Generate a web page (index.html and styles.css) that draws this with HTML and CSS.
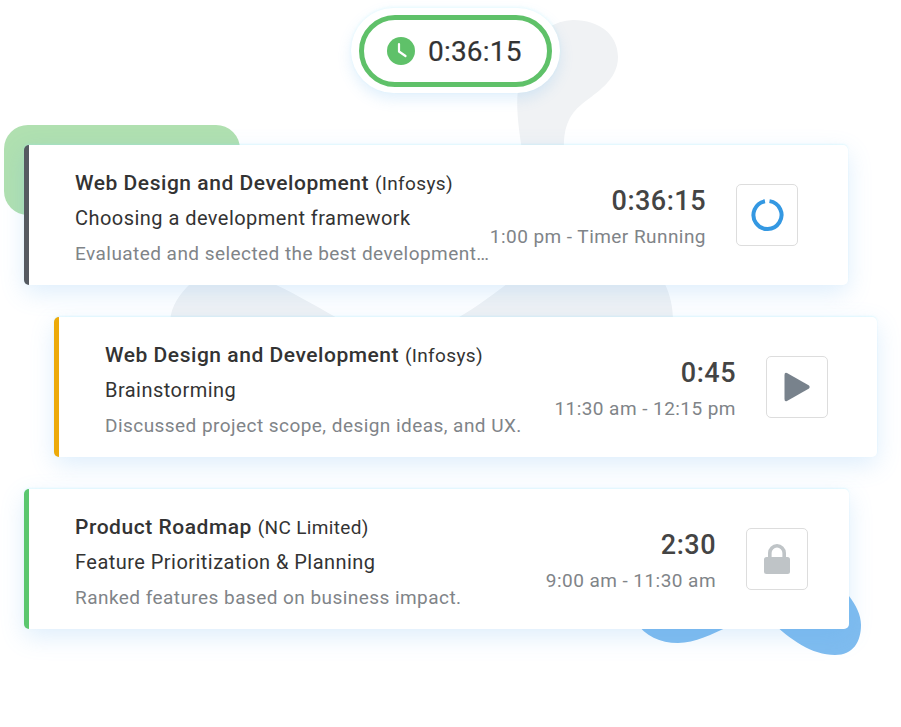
FILE: index.html
```html
<!DOCTYPE html>
<html lang="en">
<head>
    <meta charset="UTF-8">
    <meta name="viewport" content="width=device-width, initial-scale=1.0">
    <title>Timesheet Entries</title>
    <link rel="stylesheet" href="styles.css">
</head>

<body>
    <div class="page">
        <!-- Background shapes behind the cards -->
        <svg class="blobs" width="901" height="727" viewBox="0 0 901 727" aria-hidden="true">
            <path fill="#f0f2f4" d="M522 150 C518 125 516 105 518 90 C516 60 535 22 573 20 C600 20 618 35 618 57 C618 80 597 92 582 104 C568 115 563 130 564 150 Z"/>
            <path fill="#f0f2f4" d="M170 322 C171 305 180 294 190 284 L274 284 C300 296 322 310 345 322 Z"/>
            <path fill="#f0f2f4" d="M450 322 C470 312 488 298 507 284 L665 284 C670 295 673 306 673 322 Z"/>
            <path fill="#7fbcef" d="M636 622 C645 636 660 643 678 643 C695 643 712 634 730 626 Z"/>
            <path fill="#7fbcef" d="M770 620 C790 640 812 655 835 655 C853 655 861 642 861 625 C861 615 856 605 849 596 L840 620 Z"/>
        </svg>
        <div class="green-blob"></div>

        <div class="timer-pill">
            <div class="timer-inner">
                <svg class="clock-icon" width="28" height="28" viewBox="0 0 28 28">
                    <circle cx="14" cy="14" r="14" fill="#5fc169"/>
                    <path d="M12 7 V14.5 L18.5 19" fill="none" stroke="#fff" stroke-width="2.2" stroke-linecap="round" stroke-linejoin="round"/>
                </svg>
                <span class="timer-value">0:36:15</span>
            </div>
        </div>

        <div class="card card-running">
            <div class="card-info">
                <div class="card-title"><strong>Web Design and Development</strong> <span class="client">(Infosys)</span></div>
                <div class="card-task">Choosing a development framework</div>
                <div class="card-desc">Evaluated and selected the best development…</div>
            </div>
            <div class="card-time">
                <div class="duration">0:36:15</div>
                <div class="range">1:00 pm - Timer Running</div>
            </div>
            <div class="action-btn">
                <svg width="36" height="36" viewBox="0 0 36 36">
                    <path d="M20.5 4.14 A14 14 0 1 1 16 4.22" fill="none" stroke="#3498e2" stroke-width="4"/>
                </svg>
            </div>
        </div>

        <div class="card card-paused">
            <div class="card-info">
                <div class="card-title"><strong>Web Design and Development</strong> <span class="client">(Infosys)</span></div>
                <div class="card-task">Brainstorming</div>
                <div class="card-desc">Discussed project scope, design ideas, and UX.</div>
            </div>
            <div class="card-time">
                <div class="duration">0:45</div>
                <div class="range">11:30 am - 12:15 pm</div>
            </div>
            <div class="action-btn">
                <svg width="30" height="34" viewBox="0 0 30 34">
                    <path d="M5 3 L27 15.5 Q28.5 17 27 18.5 L5 31 Q2.5 32 2.5 29 V5 Q2.5 2 5 3 Z" fill="#78828c"/>
                </svg>
            </div>
        </div>

        <div class="card card-locked">
            <div class="card-info">
                <div class="card-title"><strong>Product Roadmap</strong> <span class="client">(NC Limited)</span></div>
                <div class="card-task">Feature Prioritization &amp; Planning</div>
                <div class="card-desc">Ranked features based on business impact.</div>
            </div>
            <div class="card-time">
                <div class="duration">2:30</div>
                <div class="range">9:00 am - 11:30 am</div>
            </div>
            <div class="action-btn">
                <svg width="28" height="32" viewBox="0 0 28 32">
                    <path d="M6.8 16 V10 A7.2 7.2 0 0 1 21.2 10 V16" fill="none" stroke="#bfc4c7" stroke-width="3.6"/>
                    <rect x="1" y="14" width="26" height="17" rx="2.5" fill="#bfc4c7"/>
                </svg>
            </div>
        </div>
    </div>
</body>

</html>
```

FILE: styles.css
```css
* {
    box-sizing: border-box;
}

body {
    margin: 0;
    background-color: #fff;
    font-family: Roboto, "Liberation Sans", sans-serif;
    color: #333;
}

.page {
    position: relative;
    width: 901px;
    height: 727px;
    padding-top: 8px;
    overflow: hidden;
}

.blobs {
    position: absolute;
    left: 0;
    top: 0;
}

.green-blob {
    position: absolute;
    left: 4px;
    top: 125px;
    width: 236px;
    height: 90px;
    background-color: #b0e0b0;
    border-radius: 24px;
}

.timer-pill {
    position: relative;
    width: 209px;
    height: 85px;
    margin-left: 351px;
    padding: 7px 8px 6px 8px;
    background-color: #fff;
    border-radius: 43px;
    box-shadow: 0 6px 14px rgba(90, 170, 240, 0.18), 0 -1px 3px rgba(150, 240, 255, 0.2);
}

.timer-inner {
    display: flex;
    align-items: center;
    height: 72px;
    padding-left: 23px;
    gap: 13px;
    border: 5px solid #5fc169;
    border-radius: 36px;
}

.timer-value {
    font-size: 28px;
    letter-spacing: 0.2px;
    color: #333;
    -webkit-text-stroke: 0.2px #333;
}

.card {
    position: relative;
    display: flex;
    align-items: center;
    height: 140px;
    background-color: #fff;
    border-left: 5px solid #555a61;
    border-radius: 5px;
    box-shadow: 0 8px 24px rgba(90, 170, 240, 0.2), 0 -1px 2px rgba(150, 240, 255, 0.25);
}

.card-running {
    width: 824px;
    margin: 52px 0 0 24px;
    padding: 0 50px 0 46px;
}

.card-paused {
    width: 823px;
    margin: 32px 0 0 54px;
    padding: 0 49px 0 46px;
    border-left-color: #edaa0a;
}

.card-locked {
    width: 825px;
    margin: 32px 0 0 24px;
    padding: 0 41px 0 46px;
    border-left-color: #5bc76f;
}

.card-info {
    flex: 1;
    min-width: 0;
    margin-top: 6px;
}

.card-title,
.card-task,
.card-desc {
    white-space: nowrap;
    height: 35px;
    line-height: 35px;
}

.card-title {
    font-size: 21px;
    letter-spacing: 0.54px;
    color: #333;
}

.card-title strong {
    font-weight: 500;
}

.client {
    font-size: 19px;
    letter-spacing: 0.35px;
}

.card-task {
    font-size: 20px;
    letter-spacing: 0.46px;
    color: #333;
}

.card-desc {
    font-size: 19px;
    letter-spacing: 0.45px;
    color: #808488;
}

.card-time {
    margin: 7px 30px 0 0;
    text-align: right;
    white-space: nowrap;
}

.duration {
    font-size: 27px;
    font-weight: 500;
    line-height: 36px;
    letter-spacing: 0.5px;
    color: #444;
}

.range {
    font-size: 19px;
    line-height: 36px;
    letter-spacing: 0.45px;
    color: #808488;
}

.action-btn {
    display: flex;
    align-items: center;
    justify-content: center;
    flex: none;
    width: 62px;
    height: 62px;
    background-color: #fff;
    border: 1px solid #ddd;
    border-radius: 5px;
}
```
